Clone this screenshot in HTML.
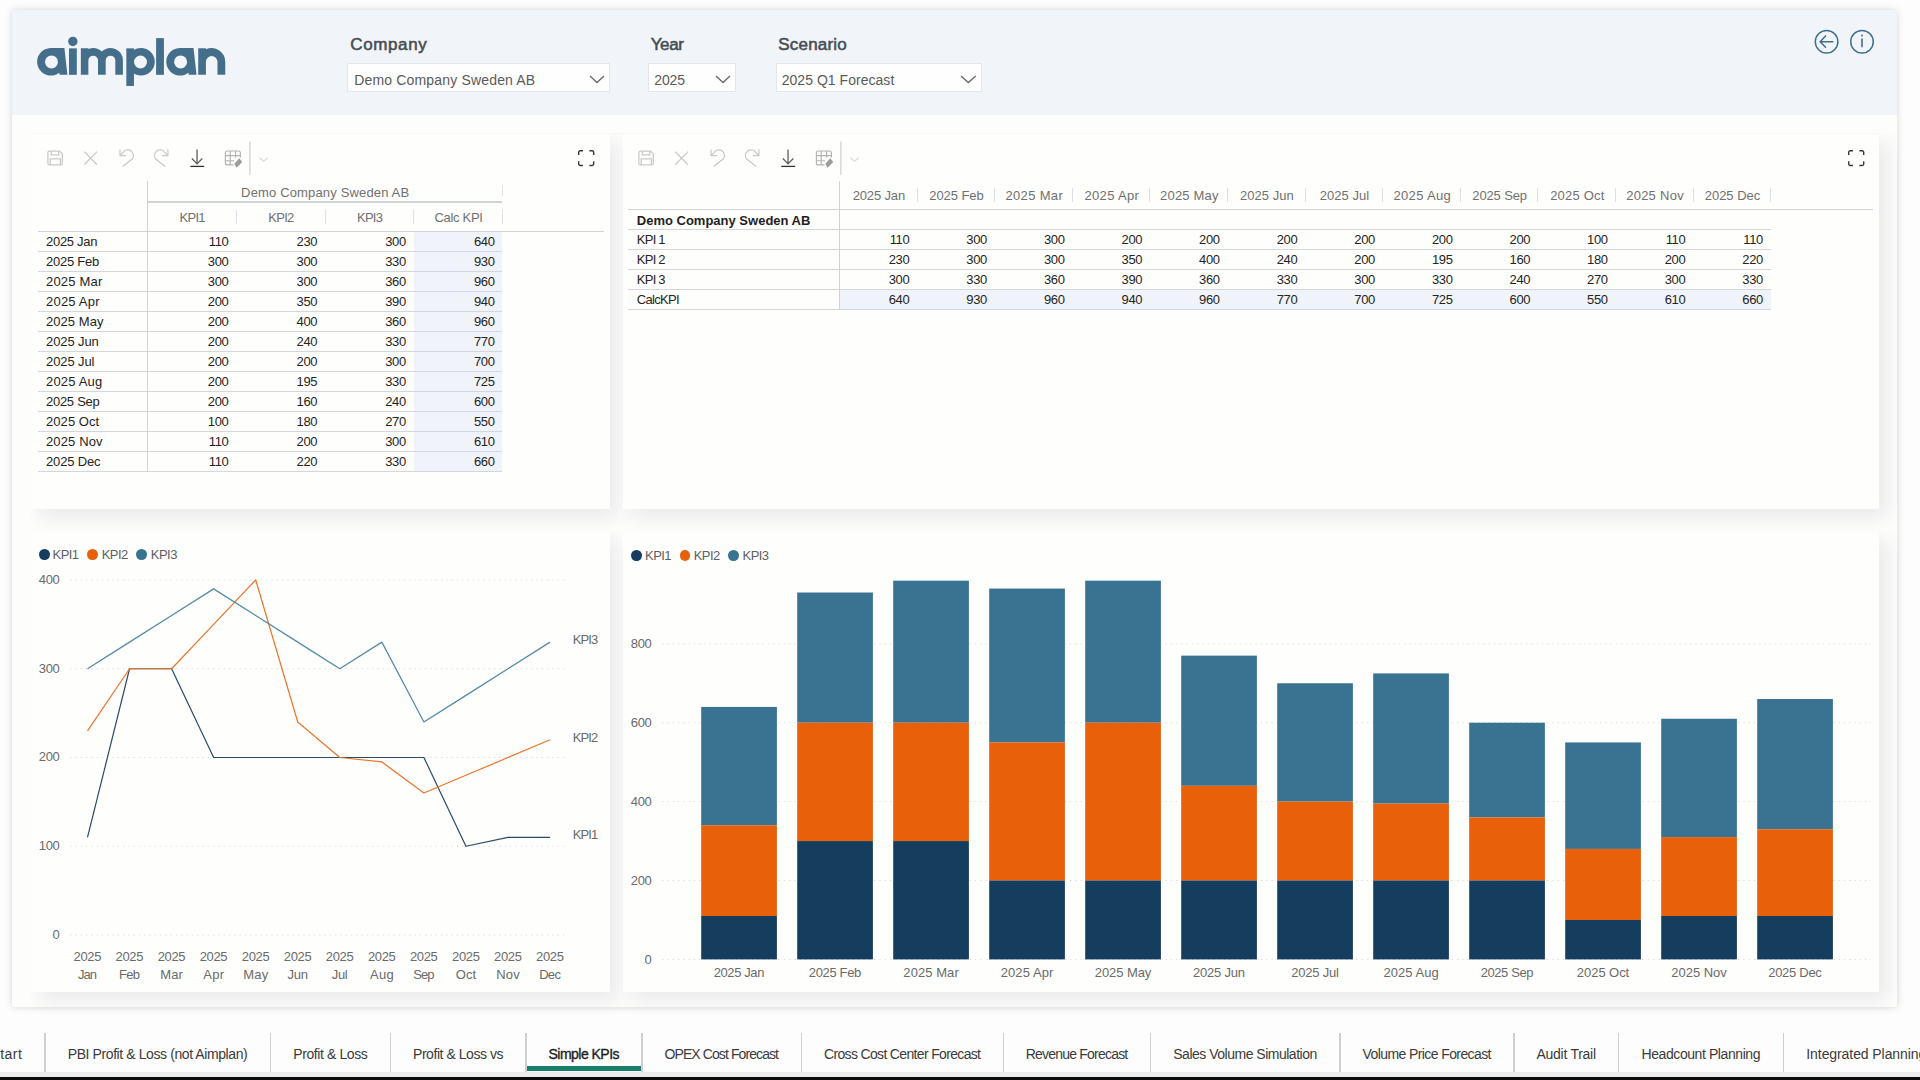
<!DOCTYPE html>
<html lang="en"><head><meta charset="utf-8"><title>Simple KPIs</title>
<style>
html,body{margin:0;padding:0}
html{width:1920px;height:1080px;overflow:hidden}
body{width:1920px;height:1080px;background:#fdfdfd;font-family:"Liberation Sans",sans-serif;}
#root{position:relative;width:1920px;height:1080px;overflow:hidden;background:#fdfdfd}
.t{position:absolute;white-space:pre;}
.abs{position:absolute;overflow:visible}
</style></head><body><div id="root">
<div class="page" style="position:absolute;left:12.00px;top:10.00px;width:1885.30px;height:996.80px;background:#fdfdfc;box-shadow:0 0 7px rgba(0,0,0,.16);border-radius:2px;"></div>
<div class="hdr" style="position:absolute;left:12.00px;top:10.00px;width:1885.30px;height:105.20px;background:#f1f5fa;"></div>
<svg class="abs" style="left:0;top:0" width="260" height="120" viewBox="0 0 260 120"><g fill="#456e8b">
<path fill-rule="evenodd" d="M50.88 48.05H64.40L67.40 74.83H59.60L59.30 72.74A13.78 13.78 0 1 1 50.88 48.05zM51.48 55.4a6.5 6.5 0 1 1 0 13a6.5 6.5 0 1 1 0-13z"/>
<rect x="68.99" y="48.35" width="7.82" height="26.48"/><circle cx="72.84" cy="41.43" r="4.7"/>
<path d="M80.84 74.83V48.35H88.36V49.04A12.39 12.39 0 0 1 101.84 51.59A12.39 12.39 0 0 1 122.89 60.45V74.83H115.32V60.45A4.81 4.81 0 0 0 105.69 60.45V74.83H97.99V60.45A4.81 4.81 0 0 0 88.36 60.45V74.83z"/>
<rect x="126.32" y="48.35" width="7.64" height="37.61"/>
<path fill-rule="evenodd" d="M141 48.05a13.78 13.78 0 1 0 0 27.56a13.78 13.78 0 1 0 0-27.56zM140.5 55.5a6.5 6.5 0 1 1 0 13a6.5 6.5 0 1 1 0-13z"/>
<rect x="156.1" y="38.12" width="7.82" height="36.71"/>
<path fill-rule="evenodd" d="M179.99 48.05H193.51L196.51 74.83H188.71L188.41 72.74A13.78 13.78 0 1 1 179.99 48.05zM180.59 55.4a6.5 6.5 0 1 1 0 13a6.5 6.5 0 1 1 0-13z"/>
<path d="M198.22 74.83V48.35H205.92V49.35A13.54 13.54 0 0 1 225.24 61.59V74.83H217.47V61.59A5.78 5.78 0 0 0 205.92 61.59V74.83z"/>
</g></svg>
<span class="t " style="left:350.30px;top:34.61px;font-size:17px;line-height:20px;color:#474d54;letter-spacing:0.607px;-webkit-text-stroke:0.55px #474d54;">Company</span>
<div class="" style="position:absolute;left:347.30px;top:63.30px;width:262.90px;height:29.00px;background:#fefefe;border:1px solid #e3e7ed;box-sizing:border-box;"></div>
<span class="t " style="left:354.20px;top:71.85px;font-size:14px;line-height:17px;color:#5a5a5a;letter-spacing:0.170px;">Demo Company Sweden AB</span>
<svg class="abs" style="left:587.70px;top:72px" width="18.00" height="14"><path d="M2 3.9L9.00 10.6L16.00 3.9" fill="none" stroke="#6b6b6b" stroke-width="1.4"/></svg>
<span class="t " style="left:650.70px;top:34.61px;font-size:17px;line-height:20px;color:#474d54;letter-spacing:-0.350px;-webkit-text-stroke:0.55px #474d54;">Year</span>
<div class="" style="position:absolute;left:647.50px;top:63.30px;width:88.70px;height:29.00px;background:#fefefe;border:1px solid #e3e7ed;box-sizing:border-box;"></div>
<span class="t " style="left:654.30px;top:71.85px;font-size:14px;line-height:17px;color:#5a5a5a;letter-spacing:-0.149px;">2025</span>
<svg class="abs" style="left:714.00px;top:72px" width="18.00" height="14"><path d="M2 3.9L9.00 10.6L16.00 3.9" fill="none" stroke="#6b6b6b" stroke-width="1.4"/></svg>
<span class="t " style="left:778.30px;top:34.61px;font-size:17px;line-height:20px;color:#474d54;letter-spacing:0.186px;-webkit-text-stroke:0.55px #474d54;">Scenario</span>
<div class="" style="position:absolute;left:775.50px;top:63.30px;width:206.00px;height:29.00px;background:#fefefe;border:1px solid #e3e7ed;box-sizing:border-box;"></div>
<span class="t " style="left:781.70px;top:71.85px;font-size:14px;line-height:17px;color:#5a5a5a;letter-spacing:0.036px;">2025 Q1 Forecast</span>
<svg class="abs" style="left:959.00px;top:72px" width="18.70" height="14"><path d="M2 3.9L9.35 10.6L16.70 3.9" fill="none" stroke="#6b6b6b" stroke-width="1.4"/></svg>
<svg class="abs" style="left:1810px;top:26px" width="70" height="32" viewBox="1810 26 70 32" fill="none" stroke="#3f6e8e" stroke-width="1.5">
<circle cx="1826.6" cy="41.7" r="11.3"/><path d="M1833.3 41.7H1820.6M1826 35.6L1820.2 41.7L1826 47.8"/>
<circle cx="1862" cy="41.7" r="11.3"/><path d="M1862 38.6V47.3" stroke-width="1.6"/><circle cx="1862" cy="35.6" r="1" fill="#3f6e8e" stroke="none"/>
</svg>
<div style="position:absolute;left:31.20px;top:134.20px;width:623.60px;height:419.60px;overflow:hidden"><div class="panel" style="width:578.60px;height:374.60px;box-shadow:8px 8px 19px rgba(20,20,45,.088);background:#fefefd;"></div></div>
<div style="position:absolute;left:31.20px;top:531.80px;width:623.60px;height:505.60px;overflow:hidden"><div class="panel" style="width:578.60px;height:460.60px;box-shadow:8px 8px 19px rgba(20,20,45,.088);background:#fefefd;"></div></div>
<div style="position:absolute;left:622.70px;top:134.20px;width:1301.10px;height:419.60px;overflow:hidden"><div class="panel" style="width:1256.10px;height:374.60px;box-shadow:8px 8px 19px rgba(20,20,45,.088);background:#fefefd;"></div></div>
<div style="position:absolute;left:623.40px;top:531.80px;width:1300.40px;height:505.60px;overflow:hidden"><div class="panel" style="width:1255.40px;height:460.60px;box-shadow:8px 8px 19px rgba(20,20,45,.088);background:#fefefd;"></div></div>
<div class="" style="position:absolute;left:31.20px;top:133.00px;width:1847.60px;height:1.00px;background:#f6f7fa;"></div>
<svg class="abs" style="left:40px;top:138px" width="240" height="40" viewBox="40 138 240 40" fill="none" stroke-linecap="butt">
<g stroke="#c9c9c9" stroke-width="1.25">
<path d="M49.4 151.1H59.6L62.3 153.8V163.4A1.5 1.5 0 0 1 60.8 164.9H49.4A1.5 1.5 0 0 1 47.9 163.4V152.6A1.5 1.5 0 0 1 49.4 151.1z"/>
<path d="M51.3 151.1V154.9H58.7V151.1M50.2 164.9V158.8H60.4V164.9"/>
<path d="M84.2 151.6L97 164.7M97 151.6L84.2 164.7"/>
<path d="M120 149.6V155.5H126M120.3 155.2L123.6 151.9A5.6 5.6 0 0 1 132.2 159.1L122.6 166.6"/>
<path d="M167.9 149.2V155.5H161.9M167.6 155.2L164.3 151.9A5.6 5.6 0 0 0 155.7 159.1L165.3 166.6"/>
</g>
<g stroke="#5e5e5e" stroke-width="1.3"><path d="M197.05 149.5V163.6M191.9 158.5L197.05 163.9L202.3 158.5"/><path d="M190.3 166.4H204.2" stroke="#333"/></g>
<g stroke="#b2b2b2" stroke-width="1.15"><path d="M233.5 164.9H227.4A2 2 0 0 1 225.4 162.9V153A2 2 0 0 1 227.4 151H238.4A2 2 0 0 1 240.4 153V157.5"/><path d="M230.2 151V164.9M235.6 151V157.5M225.4 155.6H240.4M225.4 160.7H234"/></g>
<path d="M239.3 158.2L242.2 161.9L236.6 167.8L234.4 163.7z" fill="#9c9c9c"/>
<path d="M249.9 141.4V174.9" stroke="#d2d2d2" stroke-width="1.3"/>
<path d="M259.4 157.7L263.6 161.3L267.8 157.7" stroke="#dadada" stroke-width="1.2"/>
</svg>
<svg class="abs" style="left:576.0px;top:148.0px" width="21" height="21" viewBox="-2 -2 21 21" fill="none" stroke="#3a3a3a" stroke-width="1.4">
<path d="M0.7 5V2.2A1.5 1.5 0 0 1 2.2 0.7H5M11.4 0.7H14.2A1.5 1.5 0 0 1 15.7 2.2V5M15.7 11.2V14A1.5 1.5 0 0 1 14.2 15.5H11.4M5 15.5H2.2A1.5 1.5 0 0 1 0.7 14V11.2"/></svg>
<svg class="abs" style="left:630.8px;top:138px" width="240" height="40" viewBox="40 138 240 40" fill="none" stroke-linecap="butt">
<g stroke="#c9c9c9" stroke-width="1.25">
<path d="M49.4 151.1H59.6L62.3 153.8V163.4A1.5 1.5 0 0 1 60.8 164.9H49.4A1.5 1.5 0 0 1 47.9 163.4V152.6A1.5 1.5 0 0 1 49.4 151.1z"/>
<path d="M51.3 151.1V154.9H58.7V151.1M50.2 164.9V158.8H60.4V164.9"/>
<path d="M84.2 151.6L97 164.7M97 151.6L84.2 164.7"/>
<path d="M120 149.6V155.5H126M120.3 155.2L123.6 151.9A5.6 5.6 0 0 1 132.2 159.1L122.6 166.6"/>
<path d="M167.9 149.2V155.5H161.9M167.6 155.2L164.3 151.9A5.6 5.6 0 0 0 155.7 159.1L165.3 166.6"/>
</g>
<g stroke="#5e5e5e" stroke-width="1.3"><path d="M197.05 149.5V163.6M191.9 158.5L197.05 163.9L202.3 158.5"/><path d="M190.3 166.4H204.2" stroke="#333"/></g>
<g stroke="#b2b2b2" stroke-width="1.15"><path d="M233.5 164.9H227.4A2 2 0 0 1 225.4 162.9V153A2 2 0 0 1 227.4 151H238.4A2 2 0 0 1 240.4 153V157.5"/><path d="M230.2 151V164.9M235.6 151V157.5M225.4 155.6H240.4M225.4 160.7H234"/></g>
<path d="M239.3 158.2L242.2 161.9L236.6 167.8L234.4 163.7z" fill="#9c9c9c"/>
<path d="M249.9 141.4V174.9" stroke="#d2d2d2" stroke-width="1.3"/>
<path d="M259.4 157.7L263.6 161.3L267.8 157.7" stroke="#dadada" stroke-width="1.2"/>
</svg>
<svg class="abs" style="left:1845.8px;top:148.0px" width="21" height="21" viewBox="-2 -2 21 21" fill="none" stroke="#3a3a3a" stroke-width="1.4">
<path d="M0.7 5V2.2A1.5 1.5 0 0 1 2.2 0.7H5M11.4 0.7H14.2A1.5 1.5 0 0 1 15.7 2.2V5M15.7 11.2V14A1.5 1.5 0 0 1 14.2 15.5H11.4M5 15.5H2.2A1.5 1.5 0 0 1 0.7 14V11.2"/></svg>
<div class="" style="position:absolute;left:413.80px;top:231.60px;width:88.70px;height:239.64px;background:#f0f3f9;"></div>
<div class="" style="position:absolute;left:147.00px;top:180.70px;width:1.40px;height:290.54px;background:#cfd2d6;"></div>
<div class="" style="position:absolute;left:147.70px;top:201.05px;width:354.80px;height:1.50px;background:#d0d3d8;"></div>
<div class="" style="position:absolute;left:37.80px;top:230.80px;width:566.00px;height:1.60px;background:#d0d3d8;"></div>
<div class="" style="position:absolute;left:37.80px;top:250.92px;width:464.70px;height:1.30px;background:#d3d6db;"></div>
<div class="" style="position:absolute;left:37.80px;top:270.89px;width:464.70px;height:1.30px;background:#d3d6db;"></div>
<div class="" style="position:absolute;left:37.80px;top:290.86px;width:464.70px;height:1.30px;background:#d3d6db;"></div>
<div class="" style="position:absolute;left:37.80px;top:310.83px;width:464.70px;height:1.30px;background:#d3d6db;"></div>
<div class="" style="position:absolute;left:37.80px;top:330.80px;width:464.70px;height:1.30px;background:#d3d6db;"></div>
<div class="" style="position:absolute;left:37.80px;top:350.77px;width:464.70px;height:1.30px;background:#d3d6db;"></div>
<div class="" style="position:absolute;left:37.80px;top:370.74px;width:464.70px;height:1.30px;background:#d3d6db;"></div>
<div class="" style="position:absolute;left:37.80px;top:390.71px;width:464.70px;height:1.30px;background:#d3d6db;"></div>
<div class="" style="position:absolute;left:37.80px;top:410.68px;width:464.70px;height:1.30px;background:#d3d6db;"></div>
<div class="" style="position:absolute;left:37.80px;top:430.65px;width:464.70px;height:1.30px;background:#d3d6db;"></div>
<div class="" style="position:absolute;left:37.80px;top:450.62px;width:464.70px;height:1.30px;background:#d3d6db;"></div>
<div class="" style="position:absolute;left:37.80px;top:470.59px;width:464.70px;height:1.30px;background:#d3d6db;"></div>
<div class="" style="position:absolute;left:235.80px;top:210.00px;width:1.20px;height:14.30px;background:#dcdfe3;"></div>
<div class="" style="position:absolute;left:324.50px;top:210.00px;width:1.20px;height:14.30px;background:#dcdfe3;"></div>
<div class="" style="position:absolute;left:413.20px;top:210.00px;width:1.20px;height:14.30px;background:#dcdfe3;"></div>
<div class="" style="position:absolute;left:501.90px;top:210.00px;width:1.20px;height:14.30px;background:#dcdfe3;"></div>
<div class="" style="position:absolute;left:501.90px;top:186.00px;width:1.20px;height:10.00px;background:#dcdfe3;"></div>
<span class="t " style="left:241.10px;top:184.70px;font-size:13px;line-height:16px;color:#707070;letter-spacing:0.154px;">Demo Company Sweden AB</span>
<span class="t " style="left:179.55px;top:209.70px;font-size:13px;line-height:16px;color:#707070;letter-spacing:-0.728px;">KPI1</span>
<span class="t " style="left:268.25px;top:209.70px;font-size:13px;line-height:16px;color:#707070;letter-spacing:-0.728px;">KPI2</span>
<span class="t " style="left:356.95px;top:209.70px;font-size:13px;line-height:16px;color:#707070;letter-spacing:-0.728px;">KPI3</span>
<span class="t " style="left:434.40px;top:209.70px;font-size:13px;line-height:16px;color:#707070;letter-spacing:-0.296px;">Calc KPI</span>
<span class="t " style="left:46.00px;top:234.10px;font-size:13px;line-height:16px;color:#252423;letter-spacing:-0.285px;">2025 Jan</span>
<span class="t " style="left:208.77px;top:234.10px;font-size:13px;line-height:16px;color:#252423;letter-spacing:-0.350px;">110</span>
<span class="t " style="left:296.51px;top:234.10px;font-size:13px;line-height:16px;color:#252423;letter-spacing:-0.350px;">230</span>
<span class="t " style="left:385.21px;top:234.10px;font-size:13px;line-height:16px;color:#252423;letter-spacing:-0.350px;">300</span>
<span class="t " style="left:473.91px;top:234.10px;font-size:13px;line-height:16px;color:#252423;letter-spacing:-0.350px;">640</span>
<span class="t " style="left:46.00px;top:254.07px;font-size:13px;line-height:16px;color:#252423;letter-spacing:-0.233px;">2025 Feb</span>
<span class="t " style="left:207.81px;top:254.07px;font-size:13px;line-height:16px;color:#252423;letter-spacing:-0.350px;">300</span>
<span class="t " style="left:296.51px;top:254.07px;font-size:13px;line-height:16px;color:#252423;letter-spacing:-0.350px;">300</span>
<span class="t " style="left:385.21px;top:254.07px;font-size:13px;line-height:16px;color:#252423;letter-spacing:-0.350px;">330</span>
<span class="t " style="left:473.91px;top:254.07px;font-size:13px;line-height:16px;color:#252423;letter-spacing:-0.350px;">930</span>
<span class="t " style="left:46.00px;top:274.04px;font-size:13px;line-height:16px;color:#252423;letter-spacing:0.197px;">2025 Mar</span>
<span class="t " style="left:207.81px;top:274.04px;font-size:13px;line-height:16px;color:#252423;letter-spacing:-0.350px;">300</span>
<span class="t " style="left:296.51px;top:274.04px;font-size:13px;line-height:16px;color:#252423;letter-spacing:-0.350px;">300</span>
<span class="t " style="left:385.21px;top:274.04px;font-size:13px;line-height:16px;color:#252423;letter-spacing:-0.350px;">360</span>
<span class="t " style="left:473.91px;top:274.04px;font-size:13px;line-height:16px;color:#252423;letter-spacing:-0.350px;">960</span>
<span class="t " style="left:46.00px;top:294.01px;font-size:13px;line-height:16px;color:#252423;letter-spacing:0.208px;">2025 Apr</span>
<span class="t " style="left:207.81px;top:294.01px;font-size:13px;line-height:16px;color:#252423;letter-spacing:-0.350px;">200</span>
<span class="t " style="left:296.51px;top:294.01px;font-size:13px;line-height:16px;color:#252423;letter-spacing:-0.350px;">350</span>
<span class="t " style="left:385.21px;top:294.01px;font-size:13px;line-height:16px;color:#252423;letter-spacing:-0.350px;">390</span>
<span class="t " style="left:473.91px;top:294.01px;font-size:13px;line-height:16px;color:#252423;letter-spacing:-0.350px;">940</span>
<span class="t " style="left:46.00px;top:313.98px;font-size:13px;line-height:16px;color:#252423;letter-spacing:0.058px;">2025 May</span>
<span class="t " style="left:207.81px;top:313.98px;font-size:13px;line-height:16px;color:#252423;letter-spacing:-0.350px;">200</span>
<span class="t " style="left:296.51px;top:313.98px;font-size:13px;line-height:16px;color:#252423;letter-spacing:-0.350px;">400</span>
<span class="t " style="left:385.21px;top:313.98px;font-size:13px;line-height:16px;color:#252423;letter-spacing:-0.350px;">360</span>
<span class="t " style="left:473.91px;top:313.98px;font-size:13px;line-height:16px;color:#252423;letter-spacing:-0.350px;">960</span>
<span class="t " style="left:46.00px;top:333.95px;font-size:13px;line-height:16px;color:#252423;letter-spacing:-0.099px;">2025 Jun</span>
<span class="t " style="left:207.81px;top:333.95px;font-size:13px;line-height:16px;color:#252423;letter-spacing:-0.350px;">200</span>
<span class="t " style="left:296.51px;top:333.95px;font-size:13px;line-height:16px;color:#252423;letter-spacing:-0.350px;">240</span>
<span class="t " style="left:385.21px;top:333.95px;font-size:13px;line-height:16px;color:#252423;letter-spacing:-0.350px;">330</span>
<span class="t " style="left:473.91px;top:333.95px;font-size:13px;line-height:16px;color:#252423;letter-spacing:-0.350px;">770</span>
<span class="t " style="left:46.00px;top:353.92px;font-size:13px;line-height:16px;color:#252423;letter-spacing:-0.093px;">2025 Jul</span>
<span class="t " style="left:207.81px;top:353.92px;font-size:13px;line-height:16px;color:#252423;letter-spacing:-0.350px;">200</span>
<span class="t " style="left:296.51px;top:353.92px;font-size:13px;line-height:16px;color:#252423;letter-spacing:-0.350px;">200</span>
<span class="t " style="left:385.21px;top:353.92px;font-size:13px;line-height:16px;color:#252423;letter-spacing:-0.350px;">300</span>
<span class="t " style="left:473.91px;top:353.92px;font-size:13px;line-height:16px;color:#252423;letter-spacing:-0.350px;">700</span>
<span class="t " style="left:46.00px;top:373.89px;font-size:13px;line-height:16px;color:#252423;letter-spacing:0.179px;">2025 Aug</span>
<span class="t " style="left:207.81px;top:373.89px;font-size:13px;line-height:16px;color:#252423;letter-spacing:-0.350px;">200</span>
<span class="t " style="left:296.51px;top:373.89px;font-size:13px;line-height:16px;color:#252423;letter-spacing:-0.350px;">195</span>
<span class="t " style="left:385.21px;top:373.89px;font-size:13px;line-height:16px;color:#252423;letter-spacing:-0.350px;">330</span>
<span class="t " style="left:473.91px;top:373.89px;font-size:13px;line-height:16px;color:#252423;letter-spacing:-0.350px;">725</span>
<span class="t " style="left:46.00px;top:393.86px;font-size:13px;line-height:16px;color:#252423;letter-spacing:-0.281px;">2025 Sep</span>
<span class="t " style="left:207.81px;top:393.86px;font-size:13px;line-height:16px;color:#252423;letter-spacing:-0.350px;">200</span>
<span class="t " style="left:296.51px;top:393.86px;font-size:13px;line-height:16px;color:#252423;letter-spacing:-0.350px;">160</span>
<span class="t " style="left:385.21px;top:393.86px;font-size:13px;line-height:16px;color:#252423;letter-spacing:-0.350px;">240</span>
<span class="t " style="left:473.91px;top:393.86px;font-size:13px;line-height:16px;color:#252423;letter-spacing:-0.350px;">600</span>
<span class="t " style="left:46.00px;top:413.83px;font-size:13px;line-height:16px;color:#252423;letter-spacing:0.063px;">2025 Oct</span>
<span class="t " style="left:207.81px;top:413.83px;font-size:13px;line-height:16px;color:#252423;letter-spacing:-0.350px;">100</span>
<span class="t " style="left:296.51px;top:413.83px;font-size:13px;line-height:16px;color:#252423;letter-spacing:-0.350px;">180</span>
<span class="t " style="left:385.21px;top:413.83px;font-size:13px;line-height:16px;color:#252423;letter-spacing:-0.350px;">270</span>
<span class="t " style="left:473.91px;top:413.83px;font-size:13px;line-height:16px;color:#252423;letter-spacing:-0.350px;">550</span>
<span class="t " style="left:46.00px;top:433.80px;font-size:13px;line-height:16px;color:#252423;letter-spacing:0.121px;">2025 Nov</span>
<span class="t " style="left:208.77px;top:433.80px;font-size:13px;line-height:16px;color:#252423;letter-spacing:-0.350px;">110</span>
<span class="t " style="left:296.51px;top:433.80px;font-size:13px;line-height:16px;color:#252423;letter-spacing:-0.350px;">200</span>
<span class="t " style="left:385.21px;top:433.80px;font-size:13px;line-height:16px;color:#252423;letter-spacing:-0.350px;">300</span>
<span class="t " style="left:473.91px;top:433.80px;font-size:13px;line-height:16px;color:#252423;letter-spacing:-0.350px;">610</span>
<span class="t " style="left:46.00px;top:453.77px;font-size:13px;line-height:16px;color:#252423;letter-spacing:-0.164px;">2025 Dec</span>
<span class="t " style="left:208.77px;top:453.77px;font-size:13px;line-height:16px;color:#252423;letter-spacing:-0.350px;">110</span>
<span class="t " style="left:296.51px;top:453.77px;font-size:13px;line-height:16px;color:#252423;letter-spacing:-0.350px;">220</span>
<span class="t " style="left:385.21px;top:453.77px;font-size:13px;line-height:16px;color:#252423;letter-spacing:-0.350px;">330</span>
<span class="t " style="left:473.91px;top:453.77px;font-size:13px;line-height:16px;color:#252423;letter-spacing:-0.350px;">660</span>
<div class="" style="position:absolute;left:839.50px;top:289.40px;width:931.20px;height:20.00px;background:#f0f3f9;"></div>
<div class="" style="position:absolute;left:838.80px;top:180.60px;width:1.40px;height:128.80px;background:#cfd2d6;"></div>
<div class="" style="position:absolute;left:628.40px;top:208.90px;width:1244.60px;height:1.60px;background:#d0d3d8;"></div>
<div class="" style="position:absolute;left:628.40px;top:228.85px;width:1142.30px;height:1.30px;background:#d3d6db;"></div>
<div class="" style="position:absolute;left:628.40px;top:248.80px;width:1142.30px;height:1.30px;background:#d3d6db;"></div>
<div class="" style="position:absolute;left:628.40px;top:268.75px;width:1142.30px;height:1.30px;background:#d3d6db;"></div>
<div class="" style="position:absolute;left:628.40px;top:288.75px;width:1142.30px;height:1.30px;background:#d3d6db;"></div>
<div class="" style="position:absolute;left:628.40px;top:308.75px;width:1142.30px;height:1.30px;background:#d3d6db;"></div>
<div class="" style="position:absolute;left:916.50px;top:188.00px;width:1.20px;height:14.30px;background:#dcdfe3;"></div>
<div class="" style="position:absolute;left:994.10px;top:188.00px;width:1.20px;height:14.30px;background:#dcdfe3;"></div>
<div class="" style="position:absolute;left:1071.70px;top:188.00px;width:1.20px;height:14.30px;background:#dcdfe3;"></div>
<div class="" style="position:absolute;left:1149.30px;top:188.00px;width:1.20px;height:14.30px;background:#dcdfe3;"></div>
<div class="" style="position:absolute;left:1226.90px;top:188.00px;width:1.20px;height:14.30px;background:#dcdfe3;"></div>
<div class="" style="position:absolute;left:1304.50px;top:188.00px;width:1.20px;height:14.30px;background:#dcdfe3;"></div>
<div class="" style="position:absolute;left:1382.10px;top:188.00px;width:1.20px;height:14.30px;background:#dcdfe3;"></div>
<div class="" style="position:absolute;left:1459.70px;top:188.00px;width:1.20px;height:14.30px;background:#dcdfe3;"></div>
<div class="" style="position:absolute;left:1537.30px;top:188.00px;width:1.20px;height:14.30px;background:#dcdfe3;"></div>
<div class="" style="position:absolute;left:1614.90px;top:188.00px;width:1.20px;height:14.30px;background:#dcdfe3;"></div>
<div class="" style="position:absolute;left:1692.50px;top:188.00px;width:1.20px;height:14.30px;background:#dcdfe3;"></div>
<div class="" style="position:absolute;left:1770.10px;top:188.00px;width:1.20px;height:14.30px;background:#dcdfe3;"></div>
<span class="t " style="left:852.65px;top:187.70px;font-size:13px;line-height:16px;color:#707070;letter-spacing:-0.142px;">2025 Jan</span>
<span class="t " style="left:929.35px;top:187.70px;font-size:13px;line-height:16px;color:#707070;letter-spacing:-0.091px;">2025 Feb</span>
<span class="t " style="left:1005.45px;top:187.70px;font-size:13px;line-height:16px;color:#707070;letter-spacing:0.340px;">2025 Mar</span>
<span class="t " style="left:1084.45px;top:187.70px;font-size:13px;line-height:16px;color:#707070;letter-spacing:0.350px;">2025 Apr</span>
<span class="t " style="left:1160.05px;top:187.70px;font-size:13px;line-height:16px;color:#707070;letter-spacing:0.201px;">2025 May</span>
<span class="t " style="left:1240.00px;top:187.70px;font-size:13px;line-height:16px;color:#707070;letter-spacing:0.044px;">2025 Jun</span>
<span class="t " style="left:1319.75px;top:187.70px;font-size:13px;line-height:16px;color:#707070;letter-spacing:0.050px;">2025 Jul</span>
<span class="t " style="left:1393.50px;top:187.70px;font-size:13px;line-height:16px;color:#707070;letter-spacing:0.322px;">2025 Aug</span>
<span class="t " style="left:1472.35px;top:187.70px;font-size:13px;line-height:16px;color:#707070;letter-spacing:-0.138px;">2025 Sep</span>
<span class="t " style="left:1550.20px;top:187.70px;font-size:13px;line-height:16px;color:#707070;letter-spacing:0.206px;">2025 Oct</span>
<span class="t " style="left:1626.15px;top:187.70px;font-size:13px;line-height:16px;color:#707070;letter-spacing:0.264px;">2025 Nov</span>
<span class="t " style="left:1704.75px;top:187.70px;font-size:13px;line-height:16px;color:#707070;letter-spacing:-0.022px;">2025 Dec</span>
<span class="t " style="left:636.80px;top:212.70px;font-size:13px;line-height:16px;color:#1f1f1f;font-weight:700;">Demo Company Sweden AB</span>
<span class="t " style="left:636.80px;top:232.20px;font-size:13px;line-height:16px;color:#252423;letter-spacing:-0.749px;">KPI 1</span>
<span class="t " style="left:889.67px;top:232.20px;font-size:13px;line-height:16px;color:#252423;letter-spacing:-0.350px;">110</span>
<span class="t " style="left:966.31px;top:232.20px;font-size:13px;line-height:16px;color:#252423;letter-spacing:-0.350px;">300</span>
<span class="t " style="left:1043.91px;top:232.20px;font-size:13px;line-height:16px;color:#252423;letter-spacing:-0.350px;">300</span>
<span class="t " style="left:1121.51px;top:232.20px;font-size:13px;line-height:16px;color:#252423;letter-spacing:-0.350px;">200</span>
<span class="t " style="left:1199.11px;top:232.20px;font-size:13px;line-height:16px;color:#252423;letter-spacing:-0.350px;">200</span>
<span class="t " style="left:1276.71px;top:232.20px;font-size:13px;line-height:16px;color:#252423;letter-spacing:-0.350px;">200</span>
<span class="t " style="left:1354.31px;top:232.20px;font-size:13px;line-height:16px;color:#252423;letter-spacing:-0.350px;">200</span>
<span class="t " style="left:1431.91px;top:232.20px;font-size:13px;line-height:16px;color:#252423;letter-spacing:-0.350px;">200</span>
<span class="t " style="left:1509.51px;top:232.20px;font-size:13px;line-height:16px;color:#252423;letter-spacing:-0.350px;">200</span>
<span class="t " style="left:1587.11px;top:232.20px;font-size:13px;line-height:16px;color:#252423;letter-spacing:-0.350px;">100</span>
<span class="t " style="left:1665.67px;top:232.20px;font-size:13px;line-height:16px;color:#252423;letter-spacing:-0.350px;">110</span>
<span class="t " style="left:1743.27px;top:232.20px;font-size:13px;line-height:16px;color:#252423;letter-spacing:-0.350px;">110</span>
<span class="t " style="left:636.80px;top:252.15px;font-size:13px;line-height:16px;color:#252423;letter-spacing:-0.749px;">KPI 2</span>
<span class="t " style="left:888.71px;top:252.15px;font-size:13px;line-height:16px;color:#252423;letter-spacing:-0.350px;">230</span>
<span class="t " style="left:966.31px;top:252.15px;font-size:13px;line-height:16px;color:#252423;letter-spacing:-0.350px;">300</span>
<span class="t " style="left:1043.91px;top:252.15px;font-size:13px;line-height:16px;color:#252423;letter-spacing:-0.350px;">300</span>
<span class="t " style="left:1121.51px;top:252.15px;font-size:13px;line-height:16px;color:#252423;letter-spacing:-0.350px;">350</span>
<span class="t " style="left:1199.11px;top:252.15px;font-size:13px;line-height:16px;color:#252423;letter-spacing:-0.350px;">400</span>
<span class="t " style="left:1276.71px;top:252.15px;font-size:13px;line-height:16px;color:#252423;letter-spacing:-0.350px;">240</span>
<span class="t " style="left:1354.31px;top:252.15px;font-size:13px;line-height:16px;color:#252423;letter-spacing:-0.350px;">200</span>
<span class="t " style="left:1431.91px;top:252.15px;font-size:13px;line-height:16px;color:#252423;letter-spacing:-0.350px;">195</span>
<span class="t " style="left:1509.51px;top:252.15px;font-size:13px;line-height:16px;color:#252423;letter-spacing:-0.350px;">160</span>
<span class="t " style="left:1587.11px;top:252.15px;font-size:13px;line-height:16px;color:#252423;letter-spacing:-0.350px;">180</span>
<span class="t " style="left:1664.71px;top:252.15px;font-size:13px;line-height:16px;color:#252423;letter-spacing:-0.350px;">200</span>
<span class="t " style="left:1742.31px;top:252.15px;font-size:13px;line-height:16px;color:#252423;letter-spacing:-0.350px;">220</span>
<span class="t " style="left:636.80px;top:272.10px;font-size:13px;line-height:16px;color:#252423;letter-spacing:-0.749px;">KPI 3</span>
<span class="t " style="left:888.71px;top:272.10px;font-size:13px;line-height:16px;color:#252423;letter-spacing:-0.350px;">300</span>
<span class="t " style="left:966.31px;top:272.10px;font-size:13px;line-height:16px;color:#252423;letter-spacing:-0.350px;">330</span>
<span class="t " style="left:1043.91px;top:272.10px;font-size:13px;line-height:16px;color:#252423;letter-spacing:-0.350px;">360</span>
<span class="t " style="left:1121.51px;top:272.10px;font-size:13px;line-height:16px;color:#252423;letter-spacing:-0.350px;">390</span>
<span class="t " style="left:1199.11px;top:272.10px;font-size:13px;line-height:16px;color:#252423;letter-spacing:-0.350px;">360</span>
<span class="t " style="left:1276.71px;top:272.10px;font-size:13px;line-height:16px;color:#252423;letter-spacing:-0.350px;">330</span>
<span class="t " style="left:1354.31px;top:272.10px;font-size:13px;line-height:16px;color:#252423;letter-spacing:-0.350px;">300</span>
<span class="t " style="left:1431.91px;top:272.10px;font-size:13px;line-height:16px;color:#252423;letter-spacing:-0.350px;">330</span>
<span class="t " style="left:1509.51px;top:272.10px;font-size:13px;line-height:16px;color:#252423;letter-spacing:-0.350px;">240</span>
<span class="t " style="left:1587.11px;top:272.10px;font-size:13px;line-height:16px;color:#252423;letter-spacing:-0.350px;">270</span>
<span class="t " style="left:1664.71px;top:272.10px;font-size:13px;line-height:16px;color:#252423;letter-spacing:-0.350px;">300</span>
<span class="t " style="left:1742.31px;top:272.10px;font-size:13px;line-height:16px;color:#252423;letter-spacing:-0.350px;">330</span>
<span class="t " style="left:636.80px;top:292.10px;font-size:13px;line-height:16px;color:#252423;letter-spacing:-0.694px;">CalcKPI</span>
<span class="t " style="left:888.71px;top:292.10px;font-size:13px;line-height:16px;color:#252423;letter-spacing:-0.350px;">640</span>
<span class="t " style="left:966.31px;top:292.10px;font-size:13px;line-height:16px;color:#252423;letter-spacing:-0.350px;">930</span>
<span class="t " style="left:1043.91px;top:292.10px;font-size:13px;line-height:16px;color:#252423;letter-spacing:-0.350px;">960</span>
<span class="t " style="left:1121.51px;top:292.10px;font-size:13px;line-height:16px;color:#252423;letter-spacing:-0.350px;">940</span>
<span class="t " style="left:1199.11px;top:292.10px;font-size:13px;line-height:16px;color:#252423;letter-spacing:-0.350px;">960</span>
<span class="t " style="left:1276.71px;top:292.10px;font-size:13px;line-height:16px;color:#252423;letter-spacing:-0.350px;">770</span>
<span class="t " style="left:1354.31px;top:292.10px;font-size:13px;line-height:16px;color:#252423;letter-spacing:-0.350px;">700</span>
<span class="t " style="left:1431.91px;top:292.10px;font-size:13px;line-height:16px;color:#252423;letter-spacing:-0.350px;">725</span>
<span class="t " style="left:1509.51px;top:292.10px;font-size:13px;line-height:16px;color:#252423;letter-spacing:-0.350px;">600</span>
<span class="t " style="left:1587.11px;top:292.10px;font-size:13px;line-height:16px;color:#252423;letter-spacing:-0.350px;">550</span>
<span class="t " style="left:1664.71px;top:292.10px;font-size:13px;line-height:16px;color:#252423;letter-spacing:-0.350px;">610</span>
<span class="t " style="left:1742.31px;top:292.10px;font-size:13px;line-height:16px;color:#252423;letter-spacing:-0.350px;">660</span>
<div class="" style="position:absolute;left:38.80px;top:548.80px;width:10.80px;height:10.80px;background:#153d5e;border-radius:50%;"></div>
<div class="" style="position:absolute;left:87.40px;top:548.80px;width:10.80px;height:10.80px;background:#e8600a;border-radius:50%;"></div>
<div class="" style="position:absolute;left:136.30px;top:548.80px;width:10.80px;height:10.80px;background:#3a7392;border-radius:50%;"></div>
<span class="t " style="left:52.50px;top:546.60px;font-size:13px;line-height:16px;color:#5f5f5f;letter-spacing:-0.528px;">KPI1</span>
<span class="t " style="left:101.70px;top:546.60px;font-size:13px;line-height:16px;color:#5f5f5f;letter-spacing:-0.528px;">KPI2</span>
<span class="t " style="left:150.80px;top:546.60px;font-size:13px;line-height:16px;color:#5f5f5f;letter-spacing:-0.528px;">KPI3</span>
<svg class="abs" style="left:0;top:520px" width="620" height="480" viewBox="0 520 620 480" fill="none"><path d="M70 935.00H566" stroke="#dadada" stroke-width="1" stroke-dasharray="1.3 4"/><path d="M70 846.25H566" stroke="#dadada" stroke-width="1" stroke-dasharray="1.3 4"/><path d="M70 757.50H566" stroke="#dadada" stroke-width="1" stroke-dasharray="1.3 4"/><path d="M70 668.75H566" stroke="#dadada" stroke-width="1" stroke-dasharray="1.3 4"/><path d="M70 580.00H566" stroke="#dadada" stroke-width="1" stroke-dasharray="1.3 4"/><path d="M87.50 837.38L129.55 668.75L171.60 668.75L213.65 757.50L255.70 757.50L297.75 757.50L339.80 757.50L381.85 757.50L423.90 757.50L465.95 846.25L508.00 837.38L550.05 837.38" stroke="#2b4b64" stroke-width="1.2" stroke-linejoin="round"/><path d="M87.50 730.88L129.55 668.75L171.60 668.75L213.65 624.38L255.70 580.00L297.75 722.00L339.80 757.50L381.85 761.94L423.90 793.00L465.95 775.25L508.00 757.50L550.05 739.75" stroke="#ea7529" stroke-width="1.2" stroke-linejoin="round"/><path d="M87.50 668.75L129.55 642.12L171.60 615.50L213.65 588.88L255.70 615.50L297.75 642.12L339.80 668.75L381.85 642.12L423.90 722.00L465.95 695.38L508.00 668.75L550.05 642.12" stroke="#5388a4" stroke-width="1.2" stroke-linejoin="round"/></svg>
<span class="t " style="left:52.57px;top:926.80px;font-size:13px;line-height:16px;color:#6a6a6a;letter-spacing:-0.350px;">0</span>
<span class="t " style="left:38.81px;top:838.05px;font-size:13px;line-height:16px;color:#6a6a6a;letter-spacing:-0.350px;">100</span>
<span class="t " style="left:38.81px;top:749.30px;font-size:13px;line-height:16px;color:#6a6a6a;letter-spacing:-0.350px;">200</span>
<span class="t " style="left:38.81px;top:660.55px;font-size:13px;line-height:16px;color:#6a6a6a;letter-spacing:-0.350px;">300</span>
<span class="t " style="left:38.81px;top:571.80px;font-size:13px;line-height:16px;color:#6a6a6a;letter-spacing:-0.350px;">400</span>
<span class="t " style="left:73.56px;top:949.10px;font-size:13px;line-height:16px;color:#6a6a6a;letter-spacing:-0.350px;">2025</span>
<span class="t " style="left:78.00px;top:967.10px;font-size:13px;line-height:16px;color:#6a6a6a;letter-spacing:-0.980px;">Jan</span>
<span class="t " style="left:115.61px;top:949.10px;font-size:13px;line-height:16px;color:#6a6a6a;letter-spacing:-0.350px;">2025</span>
<span class="t " style="left:119.10px;top:967.10px;font-size:13px;line-height:16px;color:#6a6a6a;letter-spacing:-0.751px;">Feb</span>
<span class="t " style="left:157.66px;top:949.10px;font-size:13px;line-height:16px;color:#6a6a6a;letter-spacing:-0.350px;">2025</span>
<span class="t " style="left:160.25px;top:967.10px;font-size:13px;line-height:16px;color:#6a6a6a;letter-spacing:0.155px;">Mar</span>
<span class="t " style="left:199.71px;top:949.10px;font-size:13px;line-height:16px;color:#6a6a6a;letter-spacing:-0.350px;">2025</span>
<span class="t " style="left:203.20px;top:967.10px;font-size:13px;line-height:16px;color:#6a6a6a;letter-spacing:0.334px;">Apr</span>
<span class="t " style="left:241.76px;top:949.10px;font-size:13px;line-height:16px;color:#6a6a6a;letter-spacing:-0.350px;">2025</span>
<span class="t " style="left:243.20px;top:967.10px;font-size:13px;line-height:16px;color:#6a6a6a;letter-spacing:0.220px;">May</span>
<span class="t " style="left:283.81px;top:949.10px;font-size:13px;line-height:16px;color:#6a6a6a;letter-spacing:-0.350px;">2025</span>
<span class="t " style="left:287.55px;top:967.10px;font-size:13px;line-height:16px;color:#6a6a6a;letter-spacing:-0.280px;">Jun</span>
<span class="t " style="left:325.86px;top:949.10px;font-size:13px;line-height:16px;color:#6a6a6a;letter-spacing:-0.350px;">2025</span>
<span class="t " style="left:331.85px;top:967.10px;font-size:13px;line-height:16px;color:#6a6a6a;letter-spacing:-0.359px;">Jul</span>
<span class="t " style="left:367.91px;top:949.10px;font-size:13px;line-height:16px;color:#6a6a6a;letter-spacing:-0.350px;">2025</span>
<span class="t " style="left:370.05px;top:967.10px;font-size:13px;line-height:16px;color:#6a6a6a;letter-spacing:0.234px;">Aug</span>
<span class="t " style="left:409.96px;top:949.10px;font-size:13px;line-height:16px;color:#6a6a6a;letter-spacing:-0.350px;">2025</span>
<span class="t " style="left:413.25px;top:967.10px;font-size:13px;line-height:16px;color:#6a6a6a;letter-spacing:-0.916px;">Sep</span>
<span class="t " style="left:452.01px;top:949.10px;font-size:13px;line-height:16px;color:#6a6a6a;letter-spacing:-0.350px;">2025</span>
<span class="t " style="left:455.75px;top:967.10px;font-size:13px;line-height:16px;color:#6a6a6a;letter-spacing:0.088px;">Oct</span>
<span class="t " style="left:494.06px;top:949.10px;font-size:13px;line-height:16px;color:#6a6a6a;letter-spacing:-0.350px;">2025</span>
<span class="t " style="left:496.20px;top:967.10px;font-size:13px;line-height:16px;color:#6a6a6a;letter-spacing:0.241px;">Nov</span>
<span class="t " style="left:536.11px;top:949.10px;font-size:13px;line-height:16px;color:#6a6a6a;letter-spacing:-0.350px;">2025</span>
<span class="t " style="left:539.15px;top:967.10px;font-size:13px;line-height:16px;color:#6a6a6a;letter-spacing:-0.659px;">Dec</span>
<span class="t " style="left:572.70px;top:632.22px;font-size:13px;line-height:16px;color:#6a6a6a;letter-spacing:-0.895px;">KPI3</span>
<span class="t " style="left:572.70px;top:729.85px;font-size:13px;line-height:16px;color:#6a6a6a;letter-spacing:-0.895px;">KPI2</span>
<span class="t " style="left:572.70px;top:827.47px;font-size:13px;line-height:16px;color:#6a6a6a;letter-spacing:-0.895px;">KPI1</span>
<div class="" style="position:absolute;left:630.80px;top:549.90px;width:10.80px;height:10.80px;background:#153d5e;border-radius:50%;"></div>
<div class="" style="position:absolute;left:679.60px;top:549.90px;width:10.80px;height:10.80px;background:#e8600a;border-radius:50%;"></div>
<div class="" style="position:absolute;left:728.30px;top:549.90px;width:10.80px;height:10.80px;background:#3a7392;border-radius:50%;"></div>
<span class="t " style="left:645.00px;top:547.70px;font-size:13px;line-height:16px;color:#5f5f5f;letter-spacing:-0.528px;">KPI1</span>
<span class="t " style="left:693.70px;top:547.70px;font-size:13px;line-height:16px;color:#5f5f5f;letter-spacing:-0.528px;">KPI2</span>
<span class="t " style="left:742.50px;top:547.70px;font-size:13px;line-height:16px;color:#5f5f5f;letter-spacing:-0.528px;">KPI3</span>
<svg class="abs" style="left:620px;top:560px" width="1260" height="410" viewBox="620 560 1260 410"><path d="M662 959.40H1871" stroke="#dadada" stroke-width="1" stroke-dasharray="1.3 4" fill="none"/><path d="M662 880.50H1871" stroke="#dadada" stroke-width="1" stroke-dasharray="1.3 4" fill="none"/><path d="M662 801.60H1871" stroke="#dadada" stroke-width="1" stroke-dasharray="1.3 4" fill="none"/><path d="M662 722.70H1871" stroke="#dadada" stroke-width="1" stroke-dasharray="1.3 4" fill="none"/><path d="M662 643.80H1871" stroke="#dadada" stroke-width="1" stroke-dasharray="1.3 4" fill="none"/><rect x="701.20" y="706.92" width="75.7" height="118.35" fill="#3a7392"/><rect x="701.20" y="825.27" width="75.7" height="90.74" fill="#e8600a"/><rect x="701.20" y="916.00" width="75.7" height="43.39" fill="#153d5e"/><rect x="797.20" y="592.51" width="75.7" height="130.18" fill="#3a7392"/><rect x="797.20" y="722.70" width="75.7" height="118.35" fill="#e8600a"/><rect x="797.20" y="841.05" width="75.7" height="118.35" fill="#153d5e"/><rect x="893.20" y="580.68" width="75.7" height="142.02" fill="#3a7392"/><rect x="893.20" y="722.70" width="75.7" height="118.35" fill="#e8600a"/><rect x="893.20" y="841.05" width="75.7" height="118.35" fill="#153d5e"/><rect x="989.20" y="588.57" width="75.7" height="153.86" fill="#3a7392"/><rect x="989.20" y="742.42" width="75.7" height="138.08" fill="#e8600a"/><rect x="989.20" y="880.50" width="75.7" height="78.90" fill="#153d5e"/><rect x="1085.20" y="580.68" width="75.7" height="142.02" fill="#3a7392"/><rect x="1085.20" y="722.70" width="75.7" height="157.80" fill="#e8600a"/><rect x="1085.20" y="880.50" width="75.7" height="78.90" fill="#153d5e"/><rect x="1181.20" y="655.63" width="75.7" height="130.18" fill="#3a7392"/><rect x="1181.20" y="785.82" width="75.7" height="94.68" fill="#e8600a"/><rect x="1181.20" y="880.50" width="75.7" height="78.90" fill="#153d5e"/><rect x="1277.20" y="683.25" width="75.7" height="118.35" fill="#3a7392"/><rect x="1277.20" y="801.60" width="75.7" height="78.90" fill="#e8600a"/><rect x="1277.20" y="880.50" width="75.7" height="78.90" fill="#153d5e"/><rect x="1373.20" y="673.39" width="75.7" height="130.18" fill="#3a7392"/><rect x="1373.20" y="803.57" width="75.7" height="76.93" fill="#e8600a"/><rect x="1373.20" y="880.50" width="75.7" height="78.90" fill="#153d5e"/><rect x="1469.20" y="722.70" width="75.7" height="94.68" fill="#3a7392"/><rect x="1469.20" y="817.38" width="75.7" height="63.12" fill="#e8600a"/><rect x="1469.20" y="880.50" width="75.7" height="78.90" fill="#153d5e"/><rect x="1565.20" y="742.42" width="75.7" height="106.51" fill="#3a7392"/><rect x="1565.20" y="848.94" width="75.7" height="71.01" fill="#e8600a"/><rect x="1565.20" y="919.95" width="75.7" height="39.45" fill="#153d5e"/><rect x="1661.20" y="718.75" width="75.7" height="118.35" fill="#3a7392"/><rect x="1661.20" y="837.11" width="75.7" height="78.90" fill="#e8600a"/><rect x="1661.20" y="916.00" width="75.7" height="43.39" fill="#153d5e"/><rect x="1757.20" y="699.03" width="75.7" height="130.18" fill="#3a7392"/><rect x="1757.20" y="829.21" width="75.7" height="86.79" fill="#e8600a"/><rect x="1757.20" y="916.00" width="75.7" height="43.39" fill="#153d5e"/></svg>
<span class="t " style="left:644.57px;top:951.50px;font-size:13px;line-height:16px;color:#6a6a6a;letter-spacing:-0.350px;">0</span>
<span class="t " style="left:630.81px;top:872.60px;font-size:13px;line-height:16px;color:#6a6a6a;letter-spacing:-0.350px;">200</span>
<span class="t " style="left:630.81px;top:793.70px;font-size:13px;line-height:16px;color:#6a6a6a;letter-spacing:-0.350px;">400</span>
<span class="t " style="left:630.81px;top:714.80px;font-size:13px;line-height:16px;color:#6a6a6a;letter-spacing:-0.350px;">600</span>
<span class="t " style="left:630.81px;top:635.90px;font-size:13px;line-height:16px;color:#6a6a6a;letter-spacing:-0.350px;">800</span>
<span class="t " style="left:713.70px;top:964.70px;font-size:13px;line-height:16px;color:#6a6a6a;letter-spacing:-0.399px;">2025 Jan</span>
<span class="t " style="left:808.82px;top:964.70px;font-size:13px;line-height:16px;color:#6a6a6a;letter-spacing:-0.354px;">2025 Feb</span>
<span class="t " style="left:903.36px;top:964.70px;font-size:13px;line-height:16px;color:#6a6a6a;letter-spacing:0.065px;">2025 Mar</span>
<span class="t " style="left:1000.72px;top:964.70px;font-size:13px;line-height:16px;color:#6a6a6a;letter-spacing:0.086px;">2025 Apr</span>
<span class="t " style="left:1094.77px;top:964.70px;font-size:13px;line-height:16px;color:#6a6a6a;letter-spacing:-0.077px;">2025 May</span>
<span class="t " style="left:1193.07px;top:964.70px;font-size:13px;line-height:16px;color:#6a6a6a;letter-spacing:-0.218px;">2025 Jun</span>
<span class="t " style="left:1291.16px;top:964.70px;font-size:13px;line-height:16px;color:#6a6a6a;letter-spacing:-0.197px;">2025 Jul</span>
<span class="t " style="left:1383.41px;top:964.70px;font-size:13px;line-height:16px;color:#6a6a6a;letter-spacing:0.048px;">2025 Aug</span>
<span class="t " style="left:1480.63px;top:964.70px;font-size:13px;line-height:16px;color:#6a6a6a;letter-spacing:-0.403px;">2025 Sep</span>
<span class="t " style="left:1576.87px;top:964.70px;font-size:13px;line-height:16px;color:#6a6a6a;letter-spacing:-0.057px;">2025 Oct</span>
<span class="t " style="left:1671.26px;top:964.70px;font-size:13px;line-height:16px;color:#6a6a6a;letter-spacing:-0.011px;">2025 Nov</span>
<span class="t " style="left:1768.24px;top:964.70px;font-size:13px;line-height:16px;color:#6a6a6a;letter-spacing:-0.289px;">2025 Dec</span>
<div class="" style="position:absolute;left:0.00px;top:1072.40px;width:1920.00px;height:4.80px;background:#ececec;"></div>
<div class="" style="position:absolute;left:0.00px;top:1076.80px;width:1920.00px;height:3.20px;background:#0b0b0b;"></div>
<div class="" style="position:absolute;left:44.35px;top:1033.30px;width:1.30px;height:38.70px;background:#cfcfcf;"></div>
<div class="" style="position:absolute;left:269.85px;top:1033.30px;width:1.30px;height:38.70px;background:#cfcfcf;"></div>
<div class="" style="position:absolute;left:389.85px;top:1033.30px;width:1.30px;height:38.70px;background:#cfcfcf;"></div>
<div class="" style="position:absolute;left:525.35px;top:1033.30px;width:1.30px;height:38.70px;background:#cfcfcf;"></div>
<div class="" style="position:absolute;left:641.35px;top:1033.30px;width:1.30px;height:38.70px;background:#cfcfcf;"></div>
<div class="" style="position:absolute;left:800.85px;top:1033.30px;width:1.30px;height:38.70px;background:#cfcfcf;"></div>
<div class="" style="position:absolute;left:1002.85px;top:1033.30px;width:1.30px;height:38.70px;background:#cfcfcf;"></div>
<div class="" style="position:absolute;left:1149.85px;top:1033.30px;width:1.30px;height:38.70px;background:#cfcfcf;"></div>
<div class="" style="position:absolute;left:1339.35px;top:1033.30px;width:1.30px;height:38.70px;background:#cfcfcf;"></div>
<div class="" style="position:absolute;left:1513.35px;top:1033.30px;width:1.30px;height:38.70px;background:#cfcfcf;"></div>
<div class="" style="position:absolute;left:1617.85px;top:1033.30px;width:1.30px;height:38.70px;background:#cfcfcf;"></div>
<div class="" style="position:absolute;left:1782.85px;top:1033.30px;width:1.30px;height:38.70px;background:#cfcfcf;"></div>
<div class="" style="position:absolute;left:526.60px;top:1066.20px;width:114.80px;height:4.60px;background:#197f6c;"></div>
<span class="t " style="left:67.75px;top:1045.75px;font-size:14px;line-height:17px;color:#3b3b3b;letter-spacing:-0.407px;">PBI Profit &amp; Loss (not Aimplan)</span>
<span class="t " style="left:293.25px;top:1045.75px;font-size:14px;line-height:17px;color:#3b3b3b;letter-spacing:-0.406px;">Profit &amp; Loss</span>
<span class="t " style="left:413.00px;top:1045.75px;font-size:14px;line-height:17px;color:#3b3b3b;letter-spacing:-0.450px;">Profit &amp; Loss vs</span>
<span class="t " style="left:548.50px;top:1045.75px;font-size:14px;line-height:17px;color:#1e1e1e;letter-spacing:-0.525px;-webkit-text-stroke:0.35px #1e1e1e;">Simple KPIs</span>
<span class="t " style="left:664.50px;top:1045.75px;font-size:14px;line-height:17px;color:#3b3b3b;letter-spacing:-0.908px;">OPEX Cost Forecast</span>
<span class="t " style="left:824.00px;top:1045.75px;font-size:14px;line-height:17px;color:#3b3b3b;letter-spacing:-0.660px;">Cross Cost Center Forecast</span>
<span class="t " style="left:1025.75px;top:1045.75px;font-size:14px;line-height:17px;color:#3b3b3b;letter-spacing:-0.793px;">Revenue Forecast</span>
<span class="t " style="left:1173.25px;top:1045.75px;font-size:14px;line-height:17px;color:#3b3b3b;letter-spacing:-0.494px;">Sales Volume Simulation</span>
<span class="t " style="left:1362.50px;top:1045.75px;font-size:14px;line-height:17px;color:#3b3b3b;letter-spacing:-0.592px;">Volume Price Forecast</span>
<span class="t " style="left:1536.50px;top:1045.75px;font-size:14px;line-height:17px;color:#3b3b3b;letter-spacing:-0.275px;">Audit Trail</span>
<span class="t " style="left:1641.50px;top:1045.75px;font-size:14px;line-height:17px;color:#3b3b3b;letter-spacing:-0.418px;">Headcount Planning</span>
<span class="t " style="left:-9.60px;top:1045.75px;font-size:14px;line-height:17px;color:#3b3b3b;letter-spacing:0.483px;">Start</span>
<span class="t " style="left:1806.30px;top:1045.75px;font-size:14px;line-height:17px;color:#3b3b3b;letter-spacing:-0.079px;">Integrated Planning</span>
</div></body></html>
